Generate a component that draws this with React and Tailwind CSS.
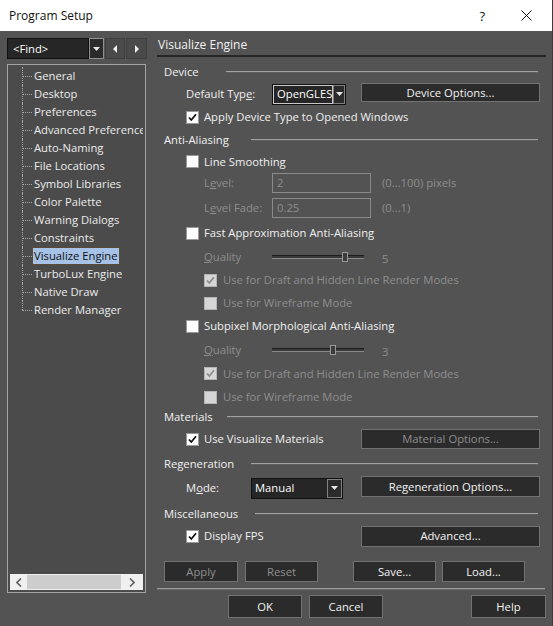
import React from 'react';

const items = [
  'General', 'Desktop', 'Preferences', 'Advanced Preferences', 'Auto-Naming', 'File Locations',
  'Symbol Libraries', 'Color Palette', 'Warning Dialogs', 'Constraints', 'Visualize Engine',
  'TurboLux Engine', 'Native Draw', 'Render Manager',
];

function Check({ checked, disabled }) {
  return (
    <span className={`w-[13px] h-[13px] shrink-0 flex items-center justify-center border ${disabled ? 'bg-[#d6d6d6] border-[#b4b4b4]' : 'bg-white border-[#9a9a9a]'}`}>
      {checked && (
        <svg width="11" height="11" viewBox="0 0 11 11">
          <path d="M2 5.5 L4.3 8 L9 2.3" fill="none" stroke={disabled ? '#8c8c8c' : '#111'} strokeWidth="1.8" />
        </svg>
      )}
    </span>
  );
}

function Btn({ children, disabled, className = '' }) {
  return (
    <div className={`flex items-center justify-center bg-[#2b2b2b] border border-[#727272] ${disabled ? 'text-[#8e8e8e]' : 'text-[#f2f2f2]'} ${className}`}>
      {children}
    </div>
  );
}

function Heading({ label, w }) {
  return (
    <div className="flex items-center">
      <span className="shrink-0 text-[#f0f0f0]" style={{ width: w }}>{label}</span>
      <div className="flex-1 mr-[8px] h-[2px] border-t border-[#a2a2a2] border-b border-b-[#5e5e5e]" />
    </div>
  );
}

function Combo({ value, w, light }) {
  return (
    <div className="flex h-[21px] border border-[#111]" style={{ width: w }}>
      <div className={`flex-1 flex items-center pl-[3px] bg-[#262626] text-white ${light ? 'border border-[#c8c8c8]' : ''}`}>{value}</div>
      <div className="w-[15px] flex items-center justify-center bg-[#2b2b2b] border border-[#808080]">
        <svg width="7" height="4" viewBox="0 0 7 4"><path d="M0 0 H7 L3.5 4 Z" fill="#e8e8e8" /></svg>
      </div>
    </div>
  );
}

function Slider({ pos }) {
  return (
    <div className="relative w-[92px] h-[10px] flex items-center">
      <div className="w-full h-[4px] border-t border-[#1c1c1c] border-b border-b-[#8a8a8a] bg-[#3a3a3a]" />
      <div className="absolute top-0 w-[6px] h-[10px] bg-[#3c3c3c] border border-[#9a9a9a]" style={{ left: pos }} />
    </div>
  );
}

export default function App() {
  return (
    <div className="w-[553px] h-[626px] flex flex-col bg-[#535353] text-[11.25px] font-['Open_Sans',sans-serif] leading-[16px] overflow-hidden border-r border-[#3a3a3a]">
      {/* title bar */}
      <div className="h-[31px] shrink-0 bg-white flex items-center text-[#111] text-[12px]">
        <span className="ml-[9px] flex-1">Program Setup</span>
        <span className="mr-[36px] text-[13px]">?</span>
        <svg width="11" height="11" viewBox="0 0 11 11" className="mr-[20px]">
          <path d="M0.5 0.5 L10.5 10.5 M10.5 0.5 L0.5 10.5" stroke="#111" strokeWidth="1" />
        </svg>
      </div>

      <div className="flex h-[562px] shrink-0">
        {/* left column */}
        <div className="w-[140px] ml-[7px] pt-[7px] flex flex-col">
          <div className="flex h-[21px]">
            <div className="w-[82px] flex items-center pl-[5px] bg-[#262626] border border-[#111] text-white">&lt;Find&gt;</div>
            <div className="w-[15px] flex items-center justify-center bg-[#2b2b2b] border border-[#909090]">
              <svg width="7" height="4" viewBox="0 0 7 4"><path d="M0 0 H7 L3.5 4 Z" fill="#e8e8e8" /></svg>
            </div>
            <div className="w-[20px] ml-px flex items-center justify-center bg-[#4a4a4a] border border-[#3e3e3e]">
              <svg width="4" height="8" viewBox="0 0 4 8"><path d="M4 0 V8 L0 4 Z" fill="#f0f0f0" /></svg>
            </div>
            <div className="w-[21px] ml-px flex items-center justify-center bg-[#4a4a4a] border border-[#3e3e3e]">
              <svg width="4" height="8" viewBox="0 0 4 8"><path d="M0 0 V8 L4 4 Z" fill="#f0f0f0" /></svg>
            </div>
          </div>
          <div className="mt-[5px] w-[139px] flex-1 flex flex-col border border-[#a4a4a4] bg-[#4b4b4b] p-[2px]">
            <div className="flex-1 overflow-hidden pl-[12px]">
              {items.map((it, i) => {
                const last = i === items.length - 1;
                const sel = it === 'Visualize Engine';
                return (
                  <div key={it} className="flex h-[18px] items-center whitespace-nowrap">
                    <div className="relative w-[11px] h-full shrink-0">
                      <div className={`absolute left-0 top-0 border-l border-dotted border-[#a8a8a8] ${last ? 'h-1/2' : 'h-full'}`} />
                      <div className="absolute left-0 top-1/2 w-[10px] border-t border-dotted border-[#a8a8a8]" />
                    </div>
                    <span className={sel ? 'px-px bg-[#a6c2e6] text-[#111] outline outline-1 outline-dotted outline-[#6a4a20]' : 'px-px text-[#ececec]'}>{it}</span>
                  </div>
                );
              })}
            </div>
            <div className="h-[16px] flex items-center bg-[#f0f0f0]">
              <div className="w-[17px] flex justify-center">
                <svg width="6" height="9" viewBox="0 0 6 9"><path d="M5 0.5 L1 4.5 L5 8.5" fill="none" stroke="#606060" strokeWidth="1.6" /></svg>
              </div>
              <div className="w-[94px] h-[14px] bg-[#cdcdcd]" />
              <div className="flex-1 flex justify-center">
                <svg width="6" height="9" viewBox="0 0 6 9"><path d="M1 0.5 L5 4.5 L1 8.5" fill="none" stroke="#606060" strokeWidth="1.6" /></svg>
              </div>
            </div>
          </div>
        </div>

        {/* right column */}
        <div className="ml-[10px] w-[389px] flex flex-col pt-[4px] text-[#f0f0f0]">
          <div className="h-[20px] flex items-center pl-px text-[12px]">Visualize Engine</div>
          <div className="h-[2px] bg-[#262626]" />

          <div className="pl-[7px] flex flex-col">
            <div className="h-[22px] mt-[4px] flex items-center"><div className="flex-1"><Heading label="Device" w={62} /></div></div>
            <div className="h-[22px] flex items-center pl-[22px]">
              <span className="w-[86px]">Default Typ<u>e</u>:</span>
              <Combo value="OpenGLES" w={74} light />
              <Btn className="ml-[15px] w-[179px] h-[19px] -mt-[3px]">Device Options...</Btn>
            </div>
            <div className="h-[24px] flex items-center pl-[22px] gap-[5px]"><Check checked /><span>Apply Device Type to Opened Windows</span></div>
            <div className="h-[22px] flex items-center"><div className="flex-1"><Heading label="Anti-Aliasing" w={87} /></div></div>
            <div className="h-[21px] flex items-center pl-[22px] gap-[5px]"><Check /><span>Line Smoothing</span></div>
            <div className="h-[22px] flex items-center pl-[40px] text-[#8e8e8e]">
              <span className="w-[68px]">L<u>e</u>vel:</span>
              <div className="w-[99px] h-[20px] border border-[#8a8a8a] flex items-center pl-[4px]">2</div>
              <span className="ml-[11px]">(0...100) pixels</span>
            </div>
            <div className="h-[28px] flex items-center pl-[40px] text-[#8e8e8e]">
              <span className="w-[68px]">L<u>e</u>vel Fade:</span>
              <div className="w-[99px] h-[20px] border border-[#8a8a8a] flex items-center pl-[4px]">0.25</div>
              <span className="ml-[11px]">(0...1)</span>
            </div>
            <div className="h-[22px] flex items-center pl-[22px] gap-[5px]"><Check /><span>Fast Approximation Anti-Aliasing</span></div>
            <div className="h-[26px] flex items-center pl-[40px] text-[#8e8e8e]">
              <span className="w-[68px]"><u>Q</u>uality</span>
              <Slider pos={70} />
              <span className="ml-[18px] mt-[3px]">5</span>
            </div>
            <div className="h-[20px] flex items-center pl-[40px] gap-[6px] text-[#8e8e8e]"><Check checked disabled /><span>Use for Draft and Hidden Line Render Modes</span></div>
            <div className="h-[26px] flex items-center pl-[40px] gap-[6px] text-[#8e8e8e]"><Check disabled /><span>Use for Wireframe Mode</span></div>
            <div className="h-[20px] flex items-center pl-[22px] gap-[5px]"><Check /><span>Subpixel Morphological Anti-Aliasing</span></div>
            <div className="h-[28px] flex items-center pl-[40px] text-[#8e8e8e]">
              <span className="w-[68px]"><u>Q</u>uality</span>
              <Slider pos={58} />
              <span className="ml-[18px] mt-[3px]">3</span>
            </div>
            <div className="h-[19px] flex items-center pl-[40px] gap-[6px] text-[#8e8e8e]"><Check checked disabled /><span>Use for Draft and Hidden Line Render Modes</span></div>
            <div className="h-[28px] flex items-center pl-[40px] gap-[6px] text-[#8e8e8e]"><Check disabled /><span>Use for Wireframe Mode</span></div>
            <div className="h-[12px] flex items-center"><div className="flex-1"><Heading label="Materials" w={63} /></div></div>
            <div className="h-[32px] flex items-center pl-[22px]">
              <Check checked /><span className="ml-[5px]">Use Visualize Materials</span>
              <Btn disabled className="ml-auto mr-[6px] w-[179px] h-[20px]">Material Options...</Btn>
            </div>
            <div className="h-[18px] flex items-center"><div className="flex-1"><Heading label="Regeneration" w={87} /></div></div>
            <div className="h-[30px] flex items-center pl-[22px]">
              <span className="w-[65px]">M<u>o</u>de:</span>
              <Combo value="Manual" w={92} />
              <Btn className="ml-auto mr-[6px] w-[179px] h-[21px] -mt-[3px]">Regeneration Options...</Btn>
            </div>
            <div className="h-[22px] flex items-center"><div className="flex-1"><Heading label="Miscellaneous" w={91} /></div></div>
            <div className="h-[22px] flex items-center pl-[22px]">
              <Check checked /><span className="ml-[5px]">Display FPS</span>
              <Btn className="ml-auto mr-[6px] w-[179px] h-[21px]">Advanced...</Btn>
            </div>
            <div className="h-[21px] mt-[14px] flex">
              <Btn disabled className="w-[74px]">Apply</Btn>
              <Btn disabled className="ml-[7px] w-[73px]">Reset</Btn>
              <Btn className="ml-[35px] w-[83px]">Save...</Btn>
              <Btn className="ml-[6px] w-[83px]">Load...</Btn>
            </div>
          </div>
          <div className="mt-[6px] mr-px h-[2px] border-t border-[#9a9a9a] border-b border-b-[#6a6a6a]" />
        </div>
      </div>

      {/* bottom buttons */}
      <div className="flex pt-[2px] text-[#f2f2f2]">
        <Btn className="ml-[228px] w-[74px] h-[23px]">OK</Btn>
        <Btn className="ml-[7px] w-[74px] h-[23px]">Cancel</Btn>
        <Btn className="ml-[88px] w-[75px] h-[23px]">Help</Btn>
      </div>
    </div>
  );
}
